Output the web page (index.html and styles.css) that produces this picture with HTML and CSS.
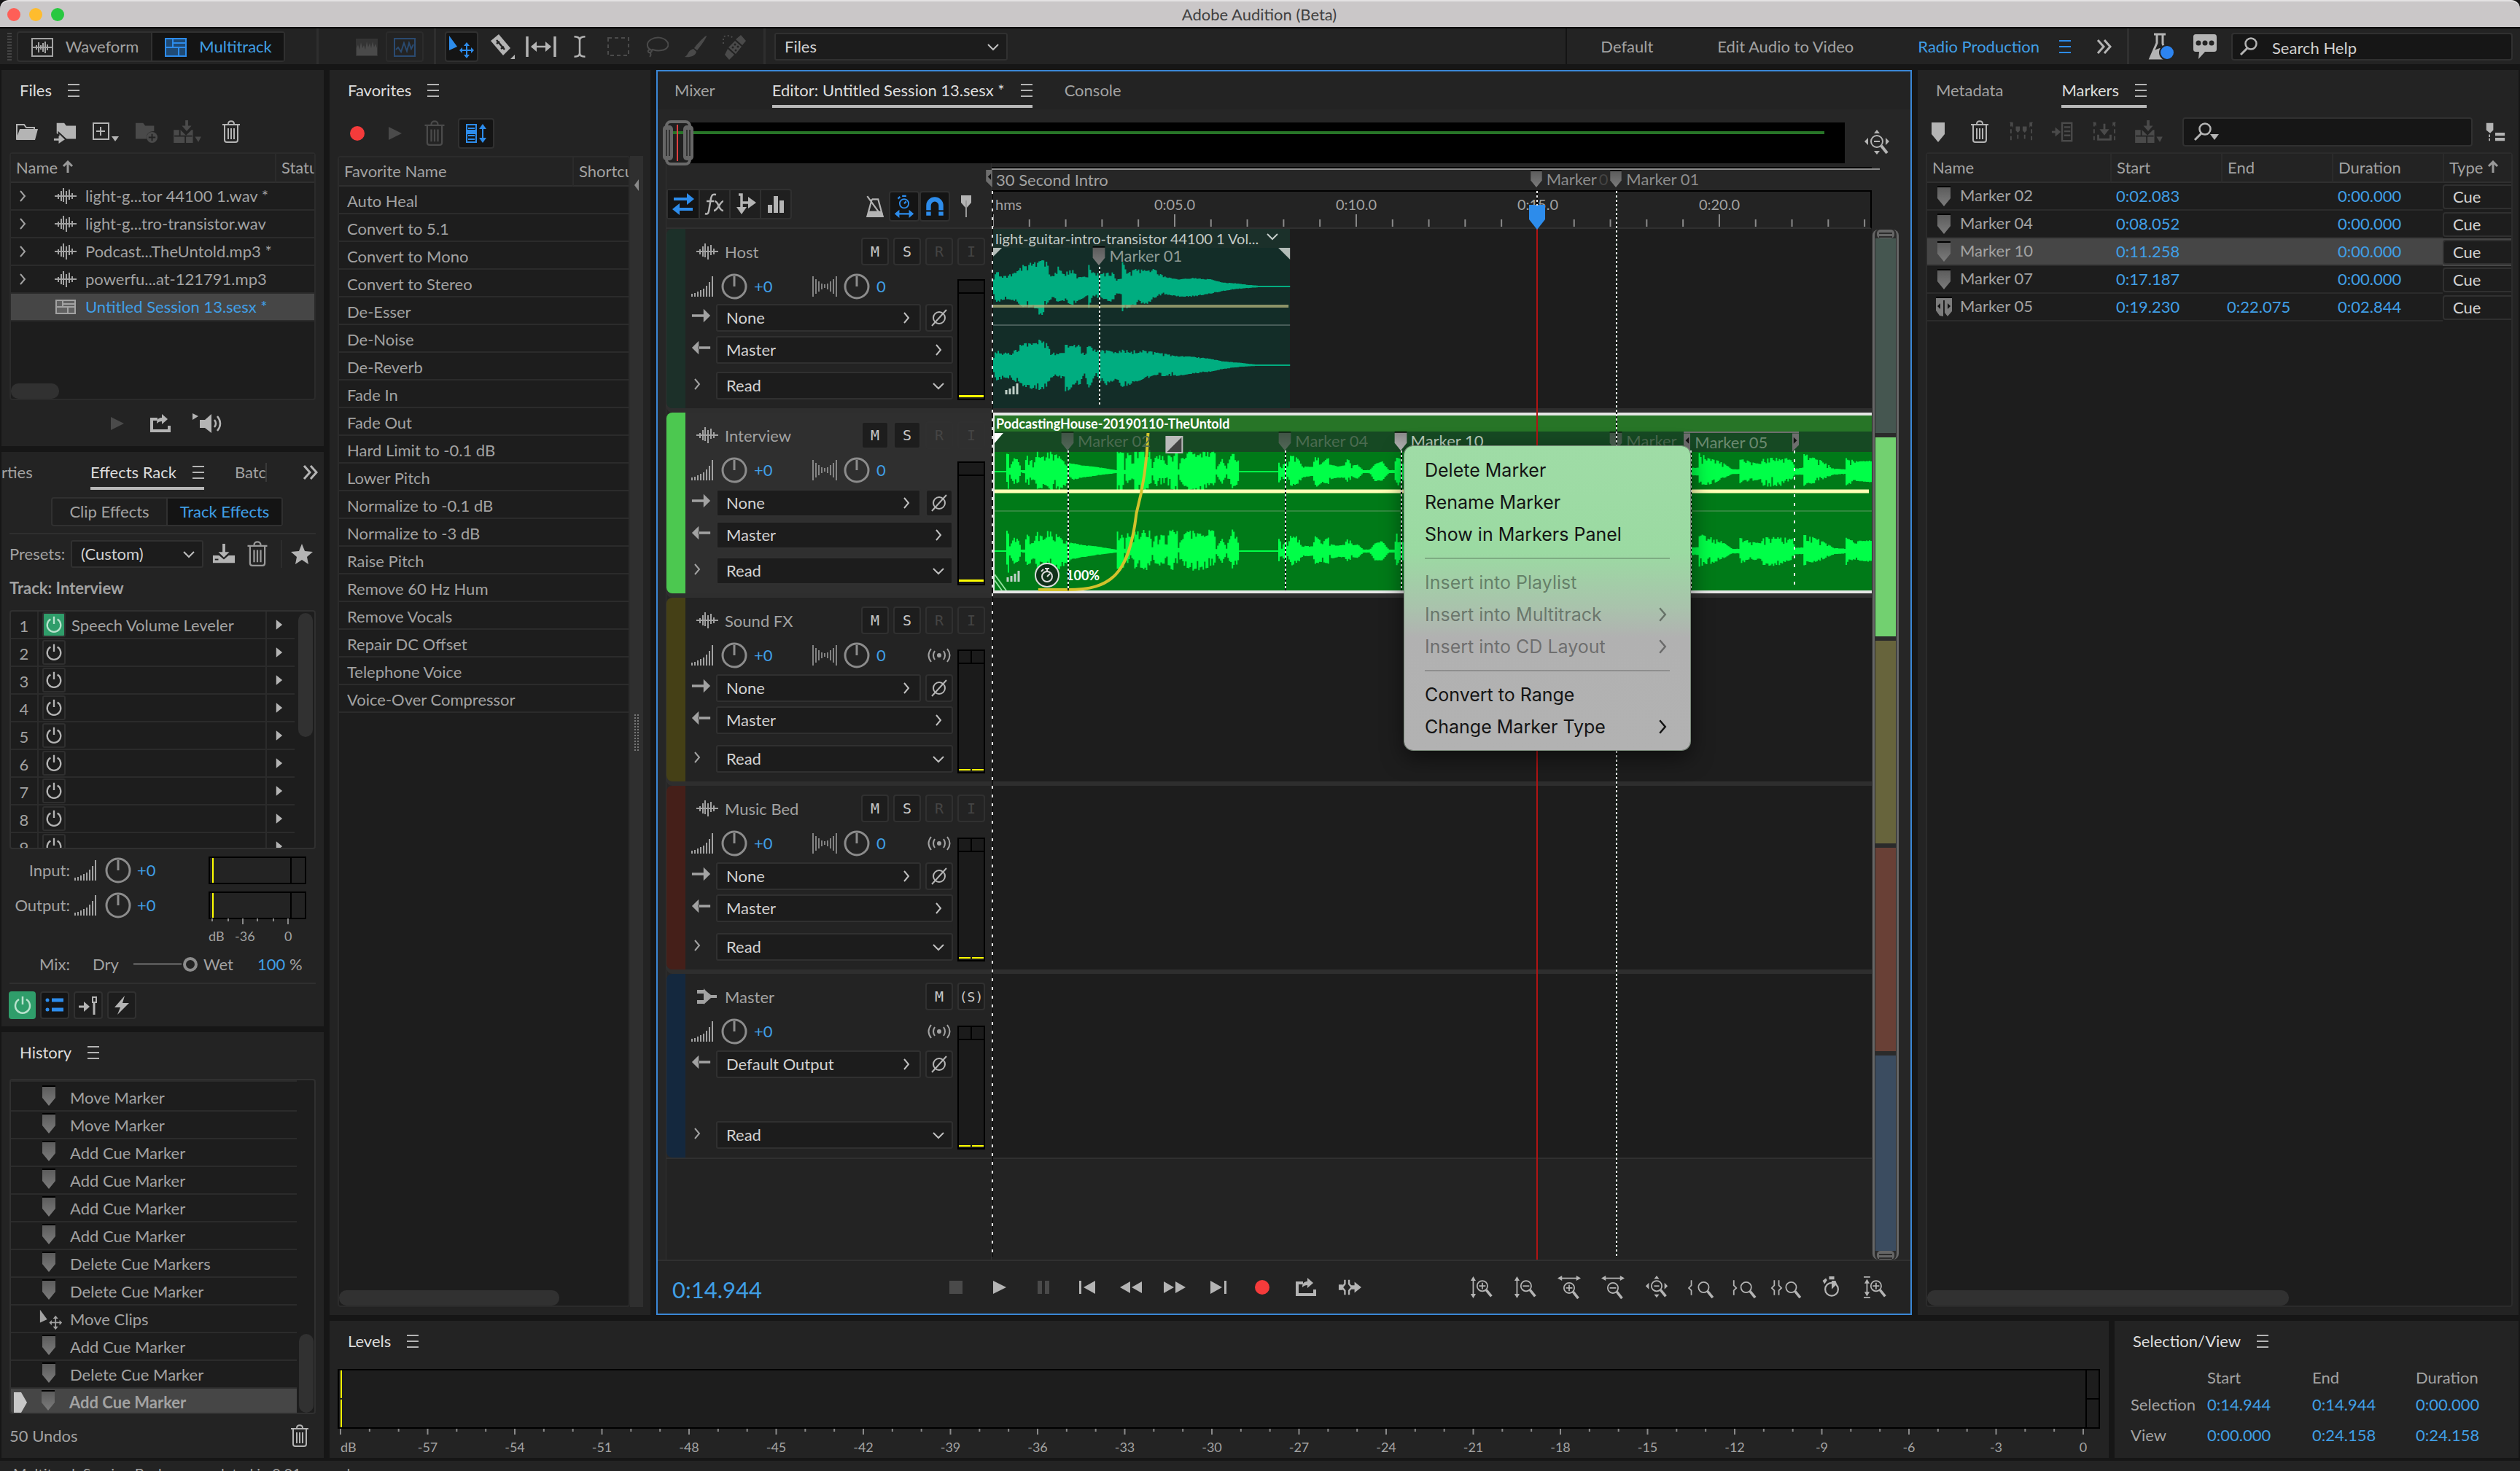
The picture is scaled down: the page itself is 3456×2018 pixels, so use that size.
FILE: index.html
```html
<!DOCTYPE html>
<html lang="en">
<head>
<meta charset="utf-8">
<title>Adobe Audition (Beta)</title>
<link rel="stylesheet" href="styles.css">
</head>
<body>
<svg class="defs" aria-hidden="true">
  <defs>
    <linearGradient id="mkfill" x1="0" y1="0" x2="0" y2="1"><stop offset="0" stop-color="#5c5c5c"/><stop offset="1" stop-color="#7c7c7c"/></linearGradient>
  </defs>
  <symbol id="i-wavebox" viewBox="0 0 32 32"><path d="M2 5h28v24H2z" fill="none" stroke="currentColor" stroke-width="2"/><path d="M3 17h26M8 14v6M11 10v14M14 14v6M17 11v12M20 9v16M23 13v8" stroke="currentColor" stroke-width="2"/></symbol>
  <symbol id="i-multi" viewBox="0 0 32 32"><path d="M1 5h30v24H1z" fill="currentColor" fill-opacity=".45"/><path d="M2 5h28v24H2zM2 17h28M12 5v12M20 17v12M12 11h18" fill="none" stroke="currentColor" stroke-width="2"/></symbol>
  <symbol id="i-spec" viewBox="0 0 32 32"><path d="M1 5h30v24H1z" fill="currentColor" opacity=".45"/><path d="M2 28V18l2-5 2 7 2-10 2 8 2-4 2 6 2-11 2 8 2-6 2 7 2-9 2 8 2-5 2 6v10z" fill="currentColor"/></symbol>
  <symbol id="i-pitch" viewBox="0 0 32 32"><path d="M2 5h28v24H2z" fill="none" stroke="currentColor" stroke-width="2"/><path d="M4 20l3-3 4 6 4-12 4 11 3-11 3 8 3-6" fill="none" stroke="currentColor" stroke-width="2"/></symbol>
  <symbol id="i-move" viewBox="0 0 36 36"><path d="M1 3v20l11-5z" fill="currentColor"/><path d="M25 12l4 5h-3v5h5v-3l4 4-4 4v-3h-5v5h3l-4 5-4-5h3v-5h-5v3l-4-4 4-4v3h5v-5h-3z" fill="currentColor"/></symbol>
  <symbol id="i-razor" viewBox="0 0 36 36"><path d="M2 10L13 1l16 19-10 10z" fill="currentColor"/><path d="M10 9l11 13M10 14l4-3M16 21l4-3" stroke="#232323" stroke-width="2.500"/><path d="M35 29v6h-6z" fill="currentColor"/></symbol>
  <symbol id="i-slip" viewBox="0 0 42 32"><path d="M2 2v28M40 2v28" stroke="currentColor" stroke-width="3.500"/><path d="M8 16h26" stroke="currentColor" stroke-width="2.500"/><path d="M15 9l-8 7 8 7zM27 9l8 7-8 7z" fill="currentColor"/></symbol>
  <symbol id="i-ibeam" viewBox="0 0 32 32"><path d="M10 5c4 0 6 1 6 4v14c0 3-2 4-6 4M22 5c-4 0-6 1-6 4v14c0 3 2 4 6 4" fill="none" stroke="currentColor" stroke-width="2"/></symbol>
  <symbol id="i-marquee" viewBox="0 0 32 32"><path d="M2 4h28v24H2z" fill="none" stroke="currentColor" stroke-width="2" stroke-dasharray="5 4"/></symbol>
  <symbol id="i-lasso" viewBox="0 0 32 32"><path d="M9 21C1 18 1 10 8 6s16-3 21 2 2 12-7 13c-4 1-9 0-12-1zM9 21c-3-2-6 0-5 2s5 1 5-2M6 24c2 2 2 4 0 6" fill="none" stroke="currentColor" stroke-width="2"/></symbol>
  <symbol id="i-brush" viewBox="0 0 32 32"><path d="M31 1c1 1-9 16-13 20l-4-3C18 12 30 0 31 1zM13 19l4 4c-1 6-9 8-16 7 5-2 4-9 12-11z" fill="currentColor"/></symbol>
  <symbol id="i-heal" viewBox="0 0 36 36"><path d="M27 2l7 8-5 6-9-8zM19 10l9 8-8 10-10-9zM9 21l9 8-7 7-6-7z" fill="currentColor"/><g fill="#232323"><circle cx="19" cy="15" r="1.500"/><circle cx="23" cy="18" r="1.500"/><circle cx="16" cy="19" r="1.500"/><circle cx="20" cy="23" r="1.500"/></g><path d="M3 14V6c0-4 12-4 13 1" fill="none" stroke="currentColor" stroke-width="2" stroke-dasharray="2 3"/></symbol>
  <symbol id="i-down" viewBox="0 0 16 16"><path d="M1 5l7 7 7-7" fill="none" stroke="currentColor" stroke-width="2"/></symbol>
  <symbol id="i-right" viewBox="0 0 16 16"><path d="M5 1l6 7-6 7" fill="none" stroke="currentColor" stroke-width="2"/></symbol>
  <symbol id="i-dbl" viewBox="0 0 24 24"><path d="M3 3l8 9-8 9M12 3l8 9-8 9" fill="none" stroke="currentColor" stroke-width="3"/></symbol>
  <symbol id="i-up" viewBox="0 0 16 18"><path d="M8 17V3M2 8l6-6 6 6" fill="none" stroke="currentColor" stroke-width="3"/></symbol>
  <symbol id="i-flask" viewBox="0 0 36 40"><path d="M8 3h16M12 4v11L3 36h25l-8-20V4" fill="none" stroke="currentColor" stroke-width="3"/><path d="M8 25l8-3 6 2 6 12H3z" fill="currentColor"/><circle cx="26" cy="28" r="10" fill="#2d84f0" stroke="#232323" stroke-width="2"/></symbol>
  <symbol id="i-chat" viewBox="0 0 36 40"><path d="M6 3h24c3 0 4 1 4 4v16c0 3-1 4-4 4H18l-9 10 1-10H6c-3 0-4-1-4-4V7c0-3 1-4 4-4z" fill="currentColor"/><g fill="#232323"><circle cx="9" cy="15" r="3.500"/><circle cx="18" cy="15" r="3.500"/><circle cx="27" cy="15" r="3.500"/></g></symbol>
  <symbol id="i-search" viewBox="0 0 28 28"><circle cx="17" cy="10" r="7.500" fill="none" stroke="currentColor" stroke-width="2.500"/><path d="M12 16L3 25" stroke="currentColor" stroke-width="3"/></symbol>
  <symbol id="i-folder" viewBox="0 0 32 32"><path d="M2 26V6h10l3 4h11v4" fill="none" stroke="currentColor" stroke-width="2"/><path d="M1 27l5-15h25l-4 15z" fill="currentColor"/></symbol>
  <symbol id="i-import" viewBox="0 0 34 34"><path d="M5 19V4h11l3 4h14v19H18" fill="currentColor"/><path d="M1 28h10" stroke="currentColor" stroke-width="3"/><path d="M8 20l9 8-9 6z" fill="currentColor"/><path d="M4 22h4v-4l11 10" fill="none" stroke="#232323" stroke-width="2"/></symbol>
  <symbol id="i-new" viewBox="0 0 40 32"><path d="M3 4h21v22H3z" fill="none" stroke="currentColor" stroke-width="2"/><path d="M13 9v12M7 15h12" stroke="currentColor" stroke-width="2"/><path d="M28 22h10l-5 7z" fill="currentColor"/></symbol>
  <symbol id="i-folderadd" viewBox="0 0 34 34"><path d="M1 4h11l3 4h13v8c-8 0-12 5-11 11H1z" fill="currentColor"/><circle cx="25" cy="25" r="8" fill="currentColor"/><path d="M25 20v10M20 25h10" stroke="#232323" stroke-width="2"/></symbol>
  <symbol id="i-insert" viewBox="0 0 42 34"><path d="M1 14h10l8 8 8-8h2v19H1z" fill="currentColor"/><path d="M18 0h4v8h5l-7 8-7-8h5z" fill="currentColor"/><path d="M2 23h26M10 14v9M18 23v10" stroke="#232323" stroke-width="2"/><path d="M32 24h9l-4 8z" fill="currentColor"/></symbol>
  <symbol id="i-trash" viewBox="0 0 28 32"><path d="M2 6h24M10 5c0-5 8-5 8 0M5 7v20q0 3 3 3h12q3 0 3-3V7" fill="none" stroke="currentColor" stroke-width="2"/><path d="M10 11v15M14 11v15M18 11v15" stroke="currentColor" stroke-width="2"/></symbol>
  <symbol id="i-wavelet" viewBox="0 0 30 24"><path d="M0 12h30M5 9v7M9 5v14M12 1v19M16 5v18M20 3v14M24 8v8" stroke="currentColor" stroke-width="2"/></symbol>
  <symbol id="i-session" viewBox="0 0 30 24"><path d="M1 3h28v18H1z" fill="currentColor" fill-opacity=".3"/><path d="M2 3h26v18H2zM2 12h26M11 3v9M18 12v9M11 8h17" fill="none" stroke="currentColor" stroke-width="2"/></symbol>
  <symbol id="i-play" viewBox="0 0 32 32"><path d="M7 7l18 9-18 9z" fill="currentColor"/></symbol>
  <symbol id="i-export" viewBox="0 0 32 32"><path d="M12 10H4v16h24v-7" fill="none" stroke="currentColor" stroke-width="4"/><path d="M11 16c0-6 3-8 7-8V3l8 7-8 7v-4c-3 0-5 1-7 3z" fill="currentColor"/></symbol>
  <symbol id="i-speaker" viewBox="0 0 44 32"><path d="M1 2l8 4-8 5zM11 11h7l9-8v26l-9-7h-7z" fill="currentColor"/><path d="M31 11q4 5 0 10M35 6q8 10 0 20" fill="none" stroke="currentColor" stroke-width="2.500"/></symbol>
  <symbol id="i-rec" viewBox="0 0 32 32"><circle cx="16" cy="16" r="10" fill="#f53b3b"/></symbol>
  <symbol id="i-sync" viewBox="0 0 32 32"><path d="M3 4h13v24H3zM5 9h9M5 14h9M5 19h9M5 24h9" fill="none" stroke="currentColor" stroke-width="2"/><path d="M5 12h9v4H5zM25 8v16" fill="currentColor" stroke="currentColor" stroke-width="2"/><path d="M20 10l5-7 5 7zM20 22l5 7 5-7z" fill="currentColor"/></symbol>
  <symbol id="i-power" viewBox="0 0 28 28"><path d="M9 6a10 10 0 1 0 10 0M14 2v11" fill="none" stroke="currentColor" stroke-width="2.500"/></symbol>
  <symbol id="i-save" viewBox="0 0 34 32"><path d="M1 18h9l7 6 7-6h9v11H1z" fill="currentColor"/><path d="M15 1h4v12h6l-8 8-8-8h6z" fill="currentColor"/><path d="M4 24h5" stroke="#232323" stroke-width="2"/></symbol>
  <symbol id="i-star" viewBox="0 0 32 32"><path d="M16 2l4 10 11 1-8 7 2 10-9-6-9 6 2-10-8-7 11-1z" fill="currentColor"/></symbol>
  <symbol id="i-tri" viewBox="0 0 12 18"><path d="M1 1l10 8-10 8z" fill="currentColor"/></symbol>
  <symbol id="i-bars" viewBox="0 0 32 30"><path d="M1 25v4M5 24v5M9 22v7M13 20v9M17 18v11M21 14v15M25 9v20M29 1v28" stroke="currentColor" stroke-width="2"/></symbol>
  <symbol id="i-pan" viewBox="0 0 34 30"><path d="M1 1v28M5 5v20M9 8v14M13 11v8M21 11v8M25 8v14M29 5v20M33 1v28M17 12v5" stroke="currentColor" stroke-width="1.500"/></symbol>
  <symbol id="i-knob" viewBox="0 0 36 36"><circle cx="18" cy="18" r="16" fill="none" stroke="#8c8c8c" stroke-width="3"/><path d="M18 4v14" stroke="#8c8c8c" stroke-width="3"/></symbol>
  <symbol id="i-list" viewBox="0 0 28 28"><path d="M10 7h16M10 20h16" stroke="currentColor" stroke-width="5"/><circle cx="4" cy="7" r="2.500" fill="currentColor"/><circle cx="4" cy="20" r="2.500" fill="currentColor"/></symbol>
  <symbol id="i-route" viewBox="0 0 28 28"><path d="M1 16h8" stroke="currentColor" stroke-width="3"/><path d="M8 9l8 7-8 7z" fill="currentColor"/><path d="M20 3h5v7h-5z" fill="none" stroke="currentColor" stroke-width="2"/><path d="M22 10v17" stroke="currentColor" stroke-width="3"/></symbol>
  <symbol id="i-bolt" viewBox="0 0 28 28"><path d="M18 1L4 17h8L8 27l16-16h-9z" fill="currentColor"/></symbol>
  <symbol id="i-marker" viewBox="0 0 18 28"><path d="M0 0h18v2H0z" fill="#000"/><path d="M0 2h18v15l-9 11-9-11z" fill="url(#mkfill)"/></symbol>
  <symbol id="i-mkrange" viewBox="0 0 24 28"><path d="M1 0h22v2H1z" fill="#000"/><path d="M1 2h22v18l-6 7-4-5V5h-2v22l-5-1-5-7z" fill="#7c7c7c"/><path d="M3 13l4-4v8zM21 13l-4-4v8z" fill="#111"/></symbol>
  <symbol id="i-mkl" viewBox="0 0 10 28"><path d="M0 0h10v28L0 18z" fill="#6e6e6e"/><path d="M3 11l5-5v10z" fill="#111"/></symbol>
  <symbol id="i-mkr" viewBox="0 0 10 28"><path d="M0 0h10v18L0 28z" fill="#6e6e6e"/><path d="M7 11L2 6v10z" fill="#111"/></symbol>
  <symbol id="i-mkbig" viewBox="0 0 32 32"><path d="M7 3h18v16l-9 11-9-11z" fill="currentColor"/></symbol>
  <symbol id="i-head" viewBox="0 0 24 34"><path d="M1 0h22v20L12 34 1 20z" fill="#2d8ceb"/></symbol>
  <symbol id="i-mkset" viewBox="0 0 34 32"><path d="M2 2v28M32 2v28M12 10v20M22 10v20" stroke="currentColor" stroke-width="2" stroke-dasharray="6 4"/><path d="M0 2h5v8zM34 2h-5v8zM9 8h6v6l-3 3-3-3zM19 8h6v6l-3 3-3-3z" fill="currentColor"/></symbol>
  <symbol id="i-mklist" viewBox="0 0 34 32"><path d="M16 3h14v26H16zM19 9h9M19 15h9M19 21h9" fill="none" stroke="currentColor" stroke-width="2.500"/><path d="M1 16h6" stroke="currentColor" stroke-width="3"/><path d="M6 9l8 7-8 7z" fill="currentColor"/></symbol>
  <symbol id="i-mkexp" viewBox="0 0 34 32"><path d="M2 2v28M32 2v28" stroke="currentColor" stroke-width="2" stroke-dasharray="6 4"/><path d="M17 4v10" stroke="currentColor" stroke-width="3"/><path d="M10 12h14l-7 9zM0 2h5v6zM34 2h-5v6z" fill="currentColor"/><path d="M8 20v7h18v-7" fill="none" stroke="currentColor" stroke-width="3"/></symbol>
  <symbol id="i-mkview" viewBox="0 0 32 32"><path d="M2 2h11v11l-5 5-6-5zM16 17h15v5H16zM16 25h15v5H16z" fill="currentColor"/><path d="M7 20v12" stroke="currentColor" stroke-width="2" stroke-dasharray="4 2"/></symbol>
  <symbol id="i-metro" viewBox="0 0 26 30"><path d="M9 6h8l6 22H3L9 6M3 2l16 22" fill="none" stroke="currentColor" stroke-width="2"/><path d="M5 21h17l2 8H3z" fill="currentColor"/></symbol>
  <symbol id="i-clocksnap" viewBox="0 0 30 34"><circle cx="15" cy="13" r="6.500" fill="none" stroke="currentColor" stroke-width="2"/><path d="M15 13l3-3M12 2h6M6 6l3-3M4 28h22" stroke="currentColor" stroke-width="2.500"/><path d="M8 22l-7 6 7 6zM22 22l7 6-7 6z" fill="currentColor"/></symbol>
  <symbol id="i-magnet" viewBox="0 0 30 30"><path d="M7 27V14a8 8 0 0 1 16 0v13" fill="none" stroke="currentColor" stroke-width="6"/><path d="M2 21h26" stroke="#161616" stroke-width="2"/></symbol>
  <symbol id="i-pin" viewBox="0 0 20 32"><path d="M3 1h14v10l-7 8-7-8z" fill="currentColor"/><path d="M10 8v23" stroke="#999" stroke-width="2"/></symbol>
  <symbol id="i-swap" viewBox="0 0 32 32"><path d="M3 9h20M9 23h20" stroke="currentColor" stroke-width="4"/><path d="M21 1l10 8-10 8zM11 15L1 23l10 8z" fill="currentColor"/></symbol>
  <symbol id="i-fx" viewBox="0 0 32 32"><path d="M3 29c5 2 5-3 6-9l2-12c1-5 3-6 7-5M5 12h10M16 12c6 0 5 13 12 13M28 12c-4 0-8 13-13 13" fill="none" stroke="currentColor" stroke-width="2.500"/></symbol>
  <symbol id="i-send" viewBox="0 0 32 32"><path d="M7 3h4v18M11 14h11" fill="none" stroke="currentColor" stroke-width="3.500"/><path d="M4 20h14l-7 10zM20 6l11 8-11 8z" fill="currentColor"/></symbol>
  <symbol id="i-eq" viewBox="0 0 32 32"><path d="M8 28V17M16 28V5M24 28V11" stroke="currentColor" stroke-width="6"/></symbol>
  <symbol id="i-phase" viewBox="0 0 26 26"><circle cx="13" cy="13" r="8" fill="none" stroke="currentColor" stroke-width="2"/><path d="M3 24L23 2" stroke="currentColor" stroke-width="2"/></symbol>
  <symbol id="i-mono" viewBox="0 0 32 26"><circle cx="16" cy="13" r="3" fill="currentColor"/><path d="M10 7q-4 6 0 12M22 7q4 6 0 12M5 4q-7 9 0 18M27 4q7 9 0 18" fill="none" stroke="currentColor" stroke-width="2"/></symbol>
  <symbol id="i-ar" viewBox="0 0 30 22"><path d="M1 9h18v4H1zM18 1l10 10-10 10z" fill="currentColor"/></symbol>
  <symbol id="i-al" viewBox="0 0 30 22"><path d="M10 9h18v4H10zM11 1L1 11l10 10z" fill="currentColor"/></symbol>
  <symbol id="i-bus" viewBox="0 0 30 24"><path d="M1 3h10l9 7h8v4h-8l-9 8H1v-5h9V8H1z" fill="currentColor"/><path d="M10 1l10 11-10 11z" fill="currentColor"/></symbol>
  <symbol id="i-lens" viewBox="0 0 36 36"><circle cx="19" cy="16" r="8" fill="none" stroke="currentColor" stroke-width="2"/><path d="M25 22l8 10" stroke="currentColor" stroke-width="4"/></symbol>
  <symbol id="i-varrow" viewBox="0 0 36 36"><path d="M5 6v24" stroke="currentColor" stroke-width="2"/><path d="M1 8l4-7 4 7zM1 28l4 7 4-7z" fill="currentColor"/></symbol>
  <symbol id="i-harrow" viewBox="0 0 36 36"><path d="M5 4h26" stroke="currentColor" stroke-width="2"/><path d="M7 0L0 4l7 4zM29 0l7 4-7 4z" fill="currentColor"/></symbol>
  <symbol id="i-plus" viewBox="0 0 36 36"><path d="M19 11v10M14 16h10" stroke="currentColor" stroke-width="2"/></symbol>
  <symbol id="i-minus" viewBox="0 0 36 36"><path d="M14 16h10" stroke="currentColor" stroke-width="2"/></symbol>
  <symbol id="i-zoomout4" viewBox="0 0 36 36"><circle cx="18" cy="16" r="8" fill="none" stroke="currentColor" stroke-width="2"/><path d="M24 22l8 10" stroke="currentColor" stroke-width="4"/><path d="M14 16h8" stroke="currentColor" stroke-width="2"/><path d="M14 5l4-5 4 5zM6 11l-5 5 5 5zM30 11l5 5-5 5zM14 29l4 5 4-5z" fill="currentColor"/></symbol>
  <symbol id="i-timer" viewBox="0 0 36 36"><circle cx="18" cy="21" r="10" fill="none" stroke="currentColor" stroke-width="2.500"/><path d="M18 21V8h6l2 5zM14 1h8v5h-8zM4 8l5-4 2 3-4 6z" fill="currentColor"/></symbol>
  <symbol id="i-stop" viewBox="0 0 32 32"><path d="M7 7h18v18H7z" fill="currentColor"/></symbol>
  <symbol id="i-pause" viewBox="0 0 32 32"><path d="M8 7h6v18H8zM18 7h6v18h-6z" fill="currentColor"/></symbol>
  <symbol id="i-prev" viewBox="0 0 32 32"><path d="M5 7h3v18H5zM27 7v18L11 16z" fill="currentColor"/></symbol>
  <symbol id="i-rew" viewBox="0 0 32 32"><path d="M15 8v16L1 16zM31 8v16l-14-8z" fill="currentColor"/></symbol>
  <symbol id="i-ff" viewBox="0 0 32 32"><path d="M1 8v16l14-8zM17 8v16l14-8z" fill="currentColor"/></symbol>
  <symbol id="i-next" viewBox="0 0 32 32"><path d="M5 7v18l16-9zM24 7h3v18h-3z" fill="currentColor"/></symbol>
  <symbol id="i-skip" viewBox="0 0 34 32"><path d="M10 5v6l-4 5 4 5v6M16 5v6l4 5-4 5v6" fill="none" stroke="currentColor" stroke-width="2.500"/><path d="M1 12h6v8H1zM19 13h5V8l10 8-10 8v-5h-5z" fill="currentColor"/></symbol>
  <symbol id="i-tinybars" viewBox="0 0 20 16"><path d="M2 10v6M7 8v8M12 5v11M17 1v15" stroke="currentColor" stroke-width="3"/></symbol>
</svg>

<div class="app">
  <header class="titlebar">
    <span class="dot red"></span><span class="dot amber"></span><span class="dot green"></span>
    <h1>Adobe Audition (Beta)</h1>
  </header>

  <nav class="toolbar" aria-label="Tools">
    <span class="grip"></span>
    <div class="seg views">
      <button><svg class="i32"><use href="#i-wavebox"/></svg>Waveform</button>
      <button class="on"><svg class="i32"><use href="#i-multi"/></svg>Multitrack</button>
    </div>
    <span class="vsep wide"></span>
    <div class="tools-a">
      <button class="tool dim" aria-label="Spectral frequency"><svg class="i32"><use href="#i-spec"/></svg></button>
      <button class="tool dimblue boxed" aria-label="Spectral pitch"><svg class="i32"><use href="#i-pitch"/></svg></button>
    </div>
    <span class="vsep"></span>
    <div class="tools-b">
      <button class="tool on" aria-label="Move"><svg class="i36"><use href="#i-move"/></svg></button>
      <button class="tool" aria-label="Razor"><svg class="i36"><use href="#i-razor"/></svg></button>
      <button class="tool" aria-label="Slip"><svg class="slip"><use href="#i-slip"/></svg></button>
      <button class="tool" aria-label="Time selection"><svg class="i40"><use href="#i-ibeam"/></svg></button>
      <button class="tool dim" aria-label="Marquee"><svg class="i32"><use href="#i-marquee"/></svg></button>
      <button class="tool dim" aria-label="Lasso"><svg class="i32"><use href="#i-lasso"/></svg></button>
      <button class="tool dim" aria-label="Brush"><svg class="i32"><use href="#i-brush"/></svg></button>
      <button class="tool dim" aria-label="Spot healing"><svg class="i36"><use href="#i-heal"/></svg></button>
    </div>
    <span class="vsep"></span>
    <label class="sel filesel"><select aria-label="Panel"><option>Files</option></select><svg><use href="#i-down"/></svg></label>
    <div class="workspaces">
      <a href="#default">Default</a>
      <a href="#video">Edit Audio to Video</a>
      <a href="#radio" class="on">Radio Production</a>
      <button class="burger blue" aria-label="Workspace menu"></button>
      <button class="more" aria-label="More"><svg class="i24"><use href="#i-dbl"/></svg></button>
    </div>
    <div class="help">
      <button class="tool" aria-label="Beta"><svg class="tall"><use href="#i-flask"/></svg></button>
      <button class="tool" aria-label="Feedback"><svg class="tall"><use href="#i-chat"/></svg></button>
      <label class="field"><svg class="i28"><use href="#i-search"/></svg><input type="text" value="Search Help" aria-label="Search Help"></label>
    </div>
  </nav>

  <div class="workspace">
    <div class="left">
      <section class="panel files">
        <div class="tabs"><h2 class="tab solo">Files</h2><button class="burger" aria-label="Files menu"></button></div>
        <div class="tools">
          <button aria-label="Open"><svg class="i32"><use href="#i-folder"/></svg></button>
          <button aria-label="Import"><svg class="i32"><use href="#i-import"/></svg></button>
          <button aria-label="New"><svg class="w40"><use href="#i-new"/></svg></button>
          <button class="dim" aria-label="New folder"><svg class="i32"><use href="#i-folderadd"/></svg></button>
          <button class="dim" aria-label="Insert"><svg class="w40"><use href="#i-insert"/></svg></button>
          <button aria-label="Delete"><svg class="i32"><use href="#i-trash"/></svg></button>
        </div>
        <div class="list">
          <table>
            <colgroup><col class="c-file"><col></colgroup>
            <thead><tr><th>Name<svg class="sort"><use href="#i-up"/></svg></th><th>Status</th></tr></thead>
            <tbody>
              <tr><td colspan="2"><div class="file"><svg class="i16"><use href="#i-right"/></svg><svg class="i30"><use href="#i-wavelet"/></svg>light-g...tor 44100 1.wav *</div></td></tr>
              <tr><td colspan="2"><div class="file"><svg class="i16"><use href="#i-right"/></svg><svg class="i30"><use href="#i-wavelet"/></svg>light-g...tro-transistor.wav</div></td></tr>
              <tr><td colspan="2"><div class="file"><svg class="i16"><use href="#i-right"/></svg><svg class="i30"><use href="#i-wavelet"/></svg>Podcast...TheUntold.mp3 *</div></td></tr>
              <tr><td colspan="2"><div class="file"><svg class="i16"><use href="#i-right"/></svg><svg class="i30"><use href="#i-wavelet"/></svg>powerfu...at-121791.mp3</div></td></tr>
              <tr class="picked"><td colspan="2"><div class="file"><span class="i16"></span><svg class="i30"><use href="#i-session"/></svg><span class="blue">Untitled Session 13.sesx *</span></div></td></tr>
            </tbody>
          </table>
          <span class="hthumb" style="width:66px"></span>
        </div>
        <div class="preview">
          <button class="dim" aria-label="Play"><svg class="i32"><use href="#i-play"/></svg></button>
          <button aria-label="Loop"><svg class="i32"><use href="#i-export"/></svg></button>
          <button aria-label="Auto-play"><svg class="speaker"><use href="#i-speaker"/></svg></button>
        </div>
      </section>

      <section class="panel rack">
        <div class="tabs racktabs">
          <span class="tab off">rties</span>
          <h2 class="tab cur">Effects Rack<button class="burger" aria-label="Rack menu"></button></h2>
          <span class="tab off cut">Batch</span>
          <button class="more" aria-label="More panels"><svg class="i24"><use href="#i-dbl"/></svg></button>
        </div>
        <div class="seg racks"><button>Clip Effects</button><button class="on">Track Effects</button></div>
        <hr>
        <div class="presets">
          <label for="preset">Presets:</label>
          <span class="sel"><select id="preset"><option>(Custom)</option></select><svg><use href="#i-down"/></svg></span>
          <button aria-label="Save preset"><svg class="i32"><use href="#i-save"/></svg></button>
          <button aria-label="Delete preset"><svg class="i36"><use href="#i-trash"/></svg></button>
          <button class="fav" aria-label="Favorite"><svg class="i32"><use href="#i-star"/></svg></button>
        </div>
        <h3>Track: Interview</h3>
        <div class="slots">
          <ol>
            <li><b>1</b><button class="pw on" aria-label="Power 1"><svg><use href="#i-power"/></svg></button><span>Speech Volume Leveler</span><i><svg><use href="#i-tri"/></svg></i></li>
            <li><b>2</b><button class="pw" aria-label="Power 2"><svg><use href="#i-power"/></svg></button><span></span><i><svg><use href="#i-tri"/></svg></i></li>
            <li><b>3</b><button class="pw" aria-label="Power 3"><svg><use href="#i-power"/></svg></button><span></span><i><svg><use href="#i-tri"/></svg></i></li>
            <li><b>4</b><button class="pw" aria-label="Power 4"><svg><use href="#i-power"/></svg></button><span></span><i><svg><use href="#i-tri"/></svg></i></li>
            <li><b>5</b><button class="pw" aria-label="Power 5"><svg><use href="#i-power"/></svg></button><span></span><i><svg><use href="#i-tri"/></svg></i></li>
            <li><b>6</b><button class="pw" aria-label="Power 6"><svg><use href="#i-power"/></svg></button><span></span><i><svg><use href="#i-tri"/></svg></i></li>
            <li><b>7</b><button class="pw" aria-label="Power 7"><svg><use href="#i-power"/></svg></button><span></span><i><svg><use href="#i-tri"/></svg></i></li>
            <li><b>8</b><button class="pw" aria-label="Power 8"><svg><use href="#i-power"/></svg></button><span></span><i><svg><use href="#i-tri"/></svg></i></li>
            <li><b>9</b><button class="pw" aria-label="Power 9"><svg><use href="#i-power"/></svg></button><span></span><i><svg><use href="#i-tri"/></svg></i></li>
          </ol>
          <div class="vthumb" style="height:170px"></div>
        </div>
        <div class="gain"><span class="lab">Input:</span><svg class="bars"><use href="#i-bars"/></svg><svg class="i36"><use href="#i-knob"/></svg><span class="blue">+0</span><div class="hmeter"></div></div>
        <div class="gain"><span class="lab">Output:</span><svg class="bars"><use href="#i-bars"/></svg><svg class="i36"><use href="#i-knob"/></svg><span class="blue">+0</span><div class="hmeter"></div></div>
        <div class="gainscale"><svg class="gticks" viewBox="0 0 132 8"><path d="M5 0v4M27 0v4M47 0v8M67 0v4M89 0v4M109 0v8" stroke="#8a8a8a" stroke-width="2"/></svg><div><span>dB</span><span>-36</span><span>0</span></div></div>
        <div class="mix"><label for="mix">Mix:</label><span class="dry">Dry</span><input id="mix" type="range" value="100"><span class="wet">Wet</span><span class="pct"><span class="blue">100</span> %</span></div>
        <hr>
        <div class="rackfoot">
          <button class="green" aria-label="Rack power"><svg class="i28"><use href="#i-power"/></svg></button>
          <button class="on" aria-label="List"><svg class="i28"><use href="#i-list"/></svg></button>
          <button aria-label="Pre-fader"><svg class="i28"><use href="#i-route"/></svg></button>
          <button aria-label="Pre-render"><svg class="i28"><use href="#i-bolt"/></svg></button>
        </div>
      </section>

      <section class="panel history">
        <div class="tabs"><h2 class="tab solo">History</h2><button class="burger" aria-label="History menu"></button></div>
        <div class="hist">
          <ul>
            <li><svg class="mk"><use href="#i-marker"/></svg>Move Marker</li>
            <li><svg class="mk"><use href="#i-marker"/></svg>Move Marker</li>
            <li><svg class="mk"><use href="#i-marker"/></svg>Add Cue Marker</li>
            <li><svg class="mk"><use href="#i-marker"/></svg>Add Cue Marker</li>
            <li><svg class="mk"><use href="#i-marker"/></svg>Add Cue Marker</li>
            <li><svg class="mk"><use href="#i-marker"/></svg>Add Cue Marker</li>
            <li><svg class="mk"><use href="#i-marker"/></svg>Delete Cue Markers</li>
            <li><svg class="mk"><use href="#i-marker"/></svg>Delete Cue Marker</li>
            <li class="mv"><svg class="i32"><use href="#i-move"/></svg>Move Clips</li>
            <li><svg class="mk"><use href="#i-marker"/></svg>Add Cue Marker</li>
            <li><svg class="mk"><use href="#i-marker"/></svg>Delete Cue Marker</li>
            <li class="now"><svg class="nowtag" viewBox="0 0 18 28"><path d="M0 0h10l8 14-8 14H0z" fill="#c8c8c8"/></svg><svg class="mk"><use href="#i-marker"/></svg>Add Cue Marker</li>
          </ul>
          <div class="vthumb" style="height:108px"></div>
        </div>
        <div class="histfoot"><span>50 Undos</span><button aria-label="Delete history"><svg class="i32"><use href="#i-trash"/></svg></button></div>
      </section>
    </div>

    <div class="main">
      <div class="upper">
        <section class="panel favorites">
          <div class="tabs"><h2 class="tab solo">Favorites</h2><button class="burger" aria-label="Favorites menu"></button></div>
          <div class="tools favtools">
            <button aria-label="Record"><svg class="i32"><use href="#i-rec"/></svg></button>
            <button class="dim" aria-label="Run"><svg class="i32"><use href="#i-play"/></svg></button>
            <button class="dim" aria-label="Delete favorite"><svg class="i36"><use href="#i-trash"/></svg></button>
            <button class="on" aria-label="Edit favorites"><svg class="i32"><use href="#i-sync"/></svg></button>
          </div>
          <div class="favbody">
            <div class="list favlist">
              <table>
                <colgroup><col class="c-fav"><col></colgroup>
                <thead><tr><th>Favorite Name</th><th>Shortcut</th></tr></thead>
                <tbody>
                  <tr><td colspan="2">Auto Heal</td></tr>
                  <tr><td colspan="2">Convert to 5.1</td></tr>
                  <tr><td colspan="2">Convert to Mono</td></tr>
                  <tr><td colspan="2">Convert to Stereo</td></tr>
                  <tr><td colspan="2">De-Esser</td></tr>
                  <tr><td colspan="2">De-Noise</td></tr>
                  <tr><td colspan="2">De-Reverb</td></tr>
                  <tr><td colspan="2">Fade In</td></tr>
                  <tr><td colspan="2">Fade Out</td></tr>
                  <tr><td colspan="2">Hard Limit to -0.1 dB</td></tr>
                  <tr><td colspan="2">Lower Pitch</td></tr>
                  <tr><td colspan="2">Normalize to -0.1 dB</td></tr>
                  <tr><td colspan="2">Normalize to -3 dB</td></tr>
                  <tr><td colspan="2">Raise Pitch</td></tr>
                  <tr><td colspan="2">Remove 60 Hz Hum</td></tr>
                  <tr><td colspan="2">Remove Vocals</td></tr>
                  <tr><td colspan="2">Repair DC Offset</td></tr>
                  <tr><td colspan="2">Telephone Voice</td></tr>
                  <tr><td colspan="2">Voice-Over Compressor</td></tr>
                </tbody>
              </table>
              <span class="hthumb" style="width:302px"></span>
            </div>
            <div class="drawer"><svg viewBox="0 0 8 16"><path d="M7 0v16L1 8z" fill="#8a8a8a"/></svg><span class="dots"></span></div>
          </div>
        </section>

        <section class="panel editor">
          <div class="tabs edtabs">
            <span class="tab off">Mixer</span>
            <h2 class="tab cur">Editor: Untitled Session 13.sesx *<button class="burger" aria-label="Editor menu"></button></h2>
            <span class="tab off">Console</span>
          </div>
          <div class="overview">
            <div class="strip"><span class="span"></span><svg class="range" viewBox="0 0 42 60"><rect x="5" y="1" width="32" height="58" rx="6" fill="#1f1f1f" stroke="#6a6a6a" stroke-width="4"/><path d="M10 16h24" stroke="#277527" stroke-width="4"/><path d="M20 5v50" stroke="#e04040" stroke-width="2"/><rect x="0" y="6" width="14" height="48" rx="5" fill="#666"/><rect x="28" y="6" width="14" height="48" rx="5" fill="#666"/><path d="M5 12v36M9 12v36M33 12v36M37 12v36" stroke="#333" stroke-width="2"/></svg></div>
            <button aria-label="Zoom out full"><svg class="i36"><use href="#i-zoomout4"/></svg></button>
          </div>

          <div class="timeline">
            <div class="heads">
              <div class="edtools">
                <div class="seg quad">
                  <button class="on" aria-label="Inputs/Outputs"><svg class="i32"><use href="#i-swap"/></svg></button>
                  <button aria-label="Effects"><svg class="i32"><use href="#i-fx"/></svg></button>
                  <button aria-label="Sends"><svg class="i32"><use href="#i-send"/></svg></button>
                  <button aria-label="EQ"><svg class="i32"><use href="#i-eq"/></svg></button>
                </div>
                <div class="snap">
                  <button aria-label="Metronome"><svg class="i30h"><use href="#i-metro"/></svg></button>
                  <button class="on" aria-label="Snap to time"><svg class="i32"><use href="#i-clocksnap"/></svg></button>
                  <button class="on" aria-label="Snap"><svg class="i32"><use href="#i-magnet"/></svg></button>
                  <button class="pin" aria-label="Add marker"><svg class="i32"><use href="#i-pin"/></svg></button>
                </div>
              </div>

              <div class="track host h1">
                <div class="tname"><svg class="i30"><use href="#i-wavelet"/></svg><span>Host</span><button>M</button><button>S</button><button disabled>R</button><button disabled>I</button></div>
                <div class="tctl">
                  <div class="knobs"><svg class="bars"><use href="#i-bars"/></svg><svg class="i36"><use href="#i-knob"/></svg><span class="blue">+0</span><svg class="panic"><use href="#i-pan"/></svg><svg class="i36"><use href="#i-knob"/></svg><span class="blue">0</span></div>
                  <div class="row"><svg class="arr"><use href="#i-ar"/></svg><label class="sel"><select aria-label="Host input"><option>None</option></select><svg><use href="#i-right"/></svg></label><button class="ph" aria-label="Phase"><svg><use href="#i-phase"/></svg></button></div>
                  <div class="row"><svg class="arr"><use href="#i-al"/></svg><label class="sel"><select aria-label="Host output"><option>Master</option></select><svg><use href="#i-right"/></svg></label></div>
                  <div class="row last"><svg class="arr sm"><use href="#i-right"/></svg><label class="sel"><select aria-label="Host automation"><option>Read</option></select><svg><use href="#i-down"/></svg></label></div>
                </div>
                <div class="vmeter"></div>
              </div>
              <div class="track interview picked h2">
                <div class="tname"><svg class="i30"><use href="#i-wavelet"/></svg><span>Interview</span><button>M</button><button>S</button><button disabled>R</button><button disabled>I</button></div>
                <div class="tctl">
                  <div class="knobs"><svg class="bars"><use href="#i-bars"/></svg><svg class="i36"><use href="#i-knob"/></svg><span class="blue">+0</span><svg class="panic"><use href="#i-pan"/></svg><svg class="i36"><use href="#i-knob"/></svg><span class="blue">0</span></div>
                  <div class="row"><svg class="arr"><use href="#i-ar"/></svg><label class="sel"><select aria-label="Interview input"><option>None</option></select><svg><use href="#i-right"/></svg></label><button class="ph" aria-label="Phase"><svg><use href="#i-phase"/></svg></button></div>
                  <div class="row"><svg class="arr"><use href="#i-al"/></svg><label class="sel"><select aria-label="Interview output"><option>Master</option></select><svg><use href="#i-right"/></svg></label></div>
                  <div class="row last"><svg class="arr sm"><use href="#i-right"/></svg><label class="sel"><select aria-label="Interview automation"><option>Read</option></select><svg><use href="#i-down"/></svg></label></div>
                </div>
                <div class="vmeter"></div>
              </div>
              <div class="track sfx h3">
                <div class="tname"><svg class="i30"><use href="#i-wavelet"/></svg><span>Sound FX</span><button>M</button><button>S</button><button disabled>R</button><button disabled>I</button></div>
                <div class="tctl">
                  <div class="knobs"><svg class="bars"><use href="#i-bars"/></svg><svg class="i36"><use href="#i-knob"/></svg><span class="blue">+0</span><svg class="panic"><use href="#i-pan"/></svg><svg class="i36"><use href="#i-knob"/></svg><span class="blue">0</span><svg class="mono"><use href="#i-mono"/></svg></div>
                  <div class="row"><svg class="arr"><use href="#i-ar"/></svg><label class="sel"><select aria-label="Sound FX input"><option>None</option></select><svg><use href="#i-right"/></svg></label><button class="ph" aria-label="Phase"><svg><use href="#i-phase"/></svg></button></div>
                  <div class="row"><svg class="arr"><use href="#i-al"/></svg><label class="sel"><select aria-label="Sound FX output"><option>Master</option></select><svg><use href="#i-right"/></svg></label></div>
                  <div class="row last"><svg class="arr sm"><use href="#i-right"/></svg><label class="sel"><select aria-label="Sound FX automation"><option>Read</option></select><svg><use href="#i-down"/></svg></label></div>
                </div>
                <div class="vmeter stereo"></div>
              </div>
              <div class="track bed h3">
                <div class="tname"><svg class="i30"><use href="#i-wavelet"/></svg><span>Music Bed</span><button>M</button><button>S</button><button disabled>R</button><button disabled>I</button></div>
                <div class="tctl">
                  <div class="knobs"><svg class="bars"><use href="#i-bars"/></svg><svg class="i36"><use href="#i-knob"/></svg><span class="blue">+0</span><svg class="panic"><use href="#i-pan"/></svg><svg class="i36"><use href="#i-knob"/></svg><span class="blue">0</span><svg class="mono"><use href="#i-mono"/></svg></div>
                  <div class="row"><svg class="arr"><use href="#i-ar"/></svg><label class="sel"><select aria-label="Music Bed input"><option>None</option></select><svg><use href="#i-right"/></svg></label><button class="ph" aria-label="Phase"><svg><use href="#i-phase"/></svg></button></div>
                  <div class="row"><svg class="arr"><use href="#i-al"/></svg><label class="sel"><select aria-label="Music Bed output"><option>Master</option></select><svg><use href="#i-right"/></svg></label></div>
                  <div class="row last"><svg class="arr sm"><use href="#i-right"/></svg><label class="sel"><select aria-label="Music Bed automation"><option>Read</option></select><svg><use href="#i-down"/></svg></label></div>
                </div>
                <div class="vmeter stereo"></div>
              </div>
              <div class="track master h3">
                <div class="tname"><svg class="i30"><use href="#i-bus"/></svg><span>Master</span><button>M</button><button class="solo-safe">(S)</button></div>
                <div class="tctl">
                  <div class="knobs"><svg class="bars"><use href="#i-bars"/></svg><svg class="i36"><use href="#i-knob"/></svg><span class="blue">+0</span><svg class="mono"><use href="#i-mono"/></svg></div>
                  <div class="row"><svg class="arr"><use href="#i-al"/></svg><label class="sel"><select aria-label="Master output"><option>Default Output</option></select><svg><use href="#i-right"/></svg></label><button class="ph" aria-label="Phase"><svg><use href="#i-phase"/></svg></button></div>
                  <div class="row last"><svg class="arr sm"><use href="#i-right"/></svg><label class="sel"><select aria-label="Master automation"><option>Read</option></select><svg><use href="#i-down"/></svg></label></div>
                </div>
                <div class="vmeter stereo"></div>
              </div>
              <div class="blank"></div>
            </div>

            <div class="canvas">
              <div class="markerbar">
                <svg class="mkl"><use href="#i-mkl"/></svg><span>30 Second Intro</span>
                <div class="flag clip0" style="--t:14.944"><svg><use href="#i-marker"/></svg>Marker <em>0</em></div>
                <div class="flag" style="--t:17.14"><svg><use href="#i-marker"/></svg>Marker 01</div>
              </div>
              <div class="ruler">
                <span class="unit">hms</span>
                <span class="tm" style="--t:5">0:05.0</span><span class="tm" style="--t:10">0:10.0</span><span class="tm" style="--t:15">0:15.0</span><span class="tm" style="--t:20">0:20.0</span>
                <svg class="ticks" data-ticks="24.158"></svg>
              </div>
              <div class="lane h1">
                <div class="clip guitar" style="width:33.9%">
                  <div class="cliptitle">light-guitar-intro-transistor 44100 1 Vol...<svg><use href="#i-down"/></svg></div>
                  <svg class="wave" viewBox="0 0 408 220" preserveAspectRatio="none">
                    <path class="w" data-wave="guitar1" data-mid="53"/><path class="w" data-wave="guitar2" data-mid="161"/>
                    <path d="M0 53h408M0 161h408" stroke="#00ad80"/><path d="M0 106h408" stroke="#7d8c87"/><path d="M0 80h406" stroke="#b5b57e" stroke-opacity=".75" stroke-width="4"/>
                    <path d="M0 0h14L0 14zM392 0h16v16z" fill="#b4bdb9"/>
                  </svg>
                  <svg class="vol"><use href="#i-tinybars"/></svg>
                </div>
                <div class="flag in" style="--t:2.95"><svg><use href="#i-marker"/></svg>Marker 01</div>
                <span class="dash" style="--t:2.95"></span>
              </div>
              <div class="lane h2">
                <div class="clip pod">
                  <div class="cliptitle">PodcastingHouse-20190110-TheUntold</div>
                  <svg class="wave" viewBox="0 0 1206 218" preserveAspectRatio="none">
                    <path class="w" data-wave="pod1" data-mid="55"/><path class="w" data-wave="pod2" data-mid="164"/>
                    <path d="M0 55h1206M0 164h1206" stroke="#00ff48"/><path d="M0 109h1206" stroke="#5f9a64"/><path d="M0 82h1202" stroke="#ffffb4" stroke-width="5"/>
                    <path d="M0 0h1206v28H0z" fill="#203428" fill-opacity=".7"/><path d="M0 2h12L0 16z" fill="#fff"/>
                    <path d="M60 217h40c60 0 85-20 95-105Q209 60 211 2" fill="none" stroke="#d2c22c" stroke-width="4"/>
                    <path d="M236 7h22v22h-22z" fill="#444" stroke="#bbb" stroke-width="2"/><path d="M236 29V7h22z" fill="#bbb"/>
                    <path d="M0 204l10 14M0 196l16 22" stroke="#8fe09b" stroke-width="2"/>
                  </svg>
                  <svg class="vol"><use href="#i-tinybars"/></svg>
                  <div class="stretch"><svg viewBox="0 0 36 36"><circle cx="18" cy="18" r="16" fill="#10301a" stroke="#ddd" stroke-width="2"/><circle cx="18" cy="20" r="7" fill="none" stroke="#ddd" stroke-width="2"/><path d="M18 20l4-4M15 9h6M18 9v4M10 13l3-3" stroke="#ddd" stroke-width="2"/></svg>100%</div>
                </div>
                <span class="dash" style="--t:2.083"></span><span class="dash" style="--t:8.052"></span><span class="dash" style="--t:11.22"></span><span class="dash" style="--t:19.18"></span><span class="dash sparse" style="--t:22.02"></span>
                <div class="flag in faint" style="--t:2.083"><svg><use href="#i-marker"/></svg>Marker 02</div>
                <div class="flag in faint" style="--t:8.052"><svg><use href="#i-marker"/></svg>Marker 04</div>
                <div class="flag in lit" style="--t:11.22"><svg><use href="#i-marker"/></svg>Marker 10</div>
                <div class="flag in faint" style="--t:17.14"><svg><use href="#i-marker"/></svg>Marker</div>
                <div class="flag in range" style="--t:19.18"><svg><use href="#i-mkl"/></svg><span>Marker 05</span><svg><use href="#i-mkr"/></svg></div>
              </div>
              <div class="lane h3"></div>
              <div class="lane h3"></div>
              <div class="lane h3"></div>
              <div class="blank"></div>
              <span class="zero"></span>
              <span class="playline" style="--t:14.944"></span>
              <span class="dash full" style="--t:17.14"></span>
              <svg class="head" style="--t:14.944"><use href="#i-head"/></svg>
              <span class="cueline" style="--t:14.944"></span>

              <menu class="ctx">
                <li><button>Delete Marker</button></li>
                <li><button>Rename Marker</button></li>
                <li><button>Show in Markers Panel</button></li>
                <li class="line"></li>
                <li><button disabled>Insert into Playlist</button></li>
                <li><button disabled>Insert into Multitrack<svg><use href="#i-right"/></svg></button></li>
                <li><button disabled>Insert into CD Layout<svg><use href="#i-right"/></svg></button></li>
                <li class="line"></li>
                <li><button>Convert to Range</button></li>
                <li><button>Change Marker Type<svg><use href="#i-right"/></svg></button></li>
              </menu>
            </div>

            <div class="vscroll">
              <span class="cap"></span>
              <span class="s1"></span><span class="s2"></span><span class="s3"></span><span class="s4"></span><span class="s5"></span>
              <span class="cap"></span>
            </div>
          </div>

          <div class="transport">
            <output class="clock">0:14.944</output>
            <div class="keys">
              <button class="dim" aria-label="Stop"><svg class="i32"><use href="#i-stop"/></svg></button>
              <button aria-label="Play"><svg class="i32"><use href="#i-play"/></svg></button>
              <button class="dim" aria-label="Pause"><svg class="i32"><use href="#i-pause"/></svg></button>
              <button aria-label="Previous"><svg class="i32"><use href="#i-prev"/></svg></button>
              <button aria-label="Rewind"><svg class="i32"><use href="#i-rew"/></svg></button>
              <button aria-label="Fast forward"><svg class="i32"><use href="#i-ff"/></svg></button>
              <button aria-label="Next"><svg class="i32"><use href="#i-next"/></svg></button>
              <button aria-label="Record"><svg class="i32"><use href="#i-rec"/></svg></button>
              <button aria-label="Loop"><svg class="i32"><use href="#i-export"/></svg></button>
              <button aria-label="Skip selection"><svg class="i32"><use href="#i-skip"/></svg></button>
            </div>
            <div class="keys">
              <button aria-label="Zoom in amplitude"><svg class="z"><use href="#i-varrow"/><use href="#i-lens"/><use href="#i-plus"/></svg></button>
              <button aria-label="Zoom out amplitude"><svg class="z"><use href="#i-varrow"/><use href="#i-lens"/><use href="#i-minus"/></svg></button>
              <button aria-label="Zoom in time"><svg class="z" viewBox="0 0 36 36"><use href="#i-harrow"/><g transform="translate(-1 3)"><use href="#i-lens"/><use href="#i-plus"/></g></svg></button>
              <button aria-label="Zoom out time"><svg class="z" viewBox="0 0 36 36"><use href="#i-harrow"/><g transform="translate(-1 3)"><use href="#i-lens"/><use href="#i-minus"/></g></svg></button>
              <button aria-label="Zoom out full"><svg class="z"><use href="#i-zoomout4"/></svg></button>
              <button aria-label="Zoom to in point"><svg class="z" viewBox="0 0 36 36"><path d="M2 7v8l-4 4 4 4v7" transform="translate(2)" fill="none" stroke="currentColor" stroke-width="2"/><g transform="translate(4 2)"><use href="#i-lens"/></g></svg></button>
              <button aria-label="Zoom to out point"><svg class="z" viewBox="0 0 36 36"><path d="M2 7v8l4 4-4 4v7" fill="none" stroke="currentColor" stroke-width="2"/><g transform="translate(2 2)"><use href="#i-lens"/></g></svg></button>
              <button aria-label="Zoom to selection"><svg class="z" viewBox="0 0 36 36"><path d="M-3 7v8l-4 4 4 4v7M4 7v8l4 4-4 4v7" fill="none" stroke="currentColor" stroke-width="2"/><g transform="translate(4 2)"><use href="#i-lens"/></g></svg></button>
              <button aria-label="Zoom time"><svg class="z"><use href="#i-timer"/></svg></button>
              <button aria-label="Zoom selected track"><svg class="z" viewBox="0 0 36 36"><path d="M0 2h10M0 34h10M5 8v20" stroke="currentColor" stroke-width="2"/><path d="M1 12l4-7 4 7zM1 25l4 7 4-7z" fill="currentColor"/><use href="#i-lens"/><use href="#i-plus"/></svg></button>
            </div>
          </div>
        </section>

        <section class="panel markers">
          <div class="tabs mktabs">
            <span class="tab off">Metadata</span>
            <h2 class="tab cur">Markers<button class="burger" aria-label="Markers menu"></button></h2>
          </div>
          <div class="tools mktools">
            <button aria-label="Add marker"><svg class="i32"><use href="#i-mkbig"/></svg></button>
            <button aria-label="Delete marker"><svg class="i32"><use href="#i-trash"/></svg></button>
            <button class="dim" aria-label="Merge"><svg class="i32"><use href="#i-mkset"/></svg></button>
            <button class="dim" aria-label="Add to playlist"><svg class="i32"><use href="#i-mklist"/></svg></button>
            <button class="dim" aria-label="Export audio"><svg class="i32"><use href="#i-mkexp"/></svg></button>
            <button class="dim" aria-label="Insert into multitrack"><svg class="w40"><use href="#i-insert"/></svg></button>
            <label class="field"><svg class="lookup" viewBox="0 0 36 28"><use href="#i-search" width="28" height="28"/><path d="M24 17h12l-6 8z" fill="currentColor"/></svg><input type="text" aria-label="Filter markers"></label>
            <button aria-label="Marker view"><svg class="i28"><use href="#i-mkview"/></svg></button>
          </div>
          <div class="list mklist">
            <table>
              <colgroup><col class="c-name"><col class="c-time"><col class="c-time"><col class="c-time"><col></colgroup>
              <thead><tr><th>Name</th><th>Start</th><th>End</th><th>Duration</th><th>Type<svg class="sort"><use href="#i-up"/></svg></th></tr></thead>
              <tbody>
                <tr><td><svg class="mk"><use href="#i-marker"/></svg>Marker 02</td><td>0:02.083</td><td></td><td>0:00.000</td><td><select aria-label="Type of Marker 02"><option>Cue</option></select></td></tr>
                <tr><td><svg class="mk"><use href="#i-marker"/></svg>Marker 04</td><td>0:08.052</td><td></td><td>0:00.000</td><td><select aria-label="Type of Marker 04"><option>Cue</option></select></td></tr>
                <tr class="picked"><td><svg class="mk"><use href="#i-marker"/></svg>Marker 10</td><td>0:11.258</td><td></td><td>0:00.000</td><td><select aria-label="Type of Marker 10"><option>Cue</option></select></td></tr>
                <tr><td><svg class="mk"><use href="#i-marker"/></svg>Marker 07</td><td>0:17.187</td><td></td><td>0:00.000</td><td><select aria-label="Type of Marker 07"><option>Cue</option></select></td></tr>
                <tr><td><svg class="mk rg"><use href="#i-mkrange"/></svg>Marker 05</td><td>0:19.230</td><td>0:22.075</td><td>0:02.844</td><td><select aria-label="Type of Marker 05"><option>Cue</option></select></td></tr>
              </tbody>
            </table>
            <span class="hthumb" style="width:496px"></span>
          </div>
        </section>
      </div>

      <div class="lower">
        <section class="panel levels">
          <div class="tabs"><h2 class="tab solo">Levels</h2><button class="burger" aria-label="Levels menu"></button></div>
          <div class="bigmeter"><span class="bar"></span><span class="peaks"></span></div>
          <div class="scale">
            <svg class="lticks" data-levels="60"></svg>
            <div class="nums"><span>dB</span><span>-57</span><span>-54</span><span>-51</span><span>-48</span><span>-45</span><span>-42</span><span>-39</span><span>-36</span><span>-33</span><span>-30</span><span>-27</span><span>-24</span><span>-21</span><span>-18</span><span>-15</span><span>-12</span><span>-9</span><span>-6</span><span>-3</span><span>0</span></div>
          </div>
        </section>
        <section class="panel selview">
          <div class="tabs"><h2 class="tab solo">Selection/View</h2><button class="burger" aria-label="Selection menu"></button></div>
          <table>
            <thead><tr><th></th><th>Start</th><th>End</th><th>Duration</th></tr></thead>
            <tbody>
              <tr><th>Selection</th><td>0:14.944</td><td>0:14.944</td><td>0:00.000</td></tr>
              <tr><th>View</th><td>0:00.000</td><td>0:24.158</td><td>0:24.158</td></tr>
            </tbody>
          </table>
        </section>
      </div>
    </div>
  </div>

  <footer class="status"><span>Multitrack Session Backup completed in 0.01 seconds</span></footer>
</div>
<script src="script.js"></script>
</body>
</html>
```

FILE: styles.css
```css
:root {
  --bg: #161616;
  --panel: #232323;
  --list: #1d1d1d;
  --line: #303030;
  --text: #a2a2a2;
  --bright: #d2d2d2;
  --icon: #b4b4b4;
  --dim: #4a4a4a;
  --blue: #409fe6;
  --accent: #2d8ceb;
  --ui: Lato, "Noto Sans", sans-serif;
}
* { box-sizing: border-box; }
body { margin: 0; background: var(--bg); color: var(--text); font: 22px/26px var(--ui); overflow: hidden; }
h1, h2, h3, ul, ol, menu { margin: 0; padding: 0; font: inherit; list-style: none; }
button, input, select { font: inherit; color: inherit; background: none; border: 0; margin: 0; padding: 0; border-radius: 0; }
button { display: flex; align-items: center; justify-content: center; color: var(--icon); }
select { appearance: none; width: 100%; height: 100%; color: var(--bright); }
a { color: inherit; text-decoration: none; }
svg { display: block; flex: none; overflow: visible; }
hr { border: 0; border-top: 2px solid #2f2f2f; margin: 0 11px; }
table { border-collapse: separate; border-spacing: 0; width: 100%; table-layout: fixed; }
th { font-weight: inherit; text-align: left; }
.defs { position: absolute; width: 0; height: 0; }
.blue { color: var(--blue); }
.dim { color: var(--dim); }
.i16 { width: 16px; height: 16px; }
.i24 { width: 24px; height: 24px; }
.i28 { width: 28px; height: 28px; }
.i30 { width: 30px; height: 24px; }
.i30h { width: 30px; height: 32px; }
.i32 { width: 32px; height: 32px; }
.i36 { width: 36px; height: 36px; }
.i40 { width: 40px; height: 40px; }
.w40 { width: 40px; height: 32px; }

.app { display: flex; flex-direction: column; height: 100vh; min-width: 2400px; }

/* Title bar */
.titlebar { flex: none; height: 39px; display: flex; align-items: center; gap: 12px; padding: 0 10px; background: #cac7c8; border-top: 2px solid #e4e2e3; border-bottom: 2px solid #000; border-radius: 12px 12px 0 0; }
.titlebar h1 { flex: 1; text-align: center; color: #414141; padding-right: 92px; }
.dot { width: 18px; height: 18px; border-radius: 50%; }
.dot.red { background: #fe5f57; }
.dot.amber { background: #febc2e; }
.dot.green { background: #28c840; }

/* Toolbar */
.toolbar { flex: none; height: 49px; display: flex; align-items: center; background: var(--panel); padding: 0 10px 0 10px; }
.grip { width: 6px; height: 38px; margin-right: 7px; background: repeating-linear-gradient(#444 0 2px, transparent 2px 4px); }
.seg { display: flex; border: 2px solid var(--line); border-radius: 4px; background: #1f1f1f; }
.seg button { color: var(--text); height: 38px; }
.seg button + button { border-left: 2px solid var(--line); }
.seg .on { background: #141414; color: var(--blue); }
.seg .on svg { color: var(--accent); }
.views button { gap: 16px; width: 182px; }
.vsep { flex: none; width: 3px; height: 100%; background: #2e2e2e; }
.vsep.wide { margin-left: 43px; }
.tools-a { display: flex; padding: 0 14px 0 40px; }
.tools-a .tool { width: 52px; }
.tool { width: 36px; height: 42px; }
.boxed { border: 2px solid #2b2b2b; border-radius: 4px; }
.dimblue { color: #2a4a70; }
.tools-b { display: flex; align-items: center; gap: 12px; padding: 0 20px 0 12px; }
.tools-b .tool { width: 41px; }
.tools-b .tool.on { width: 46px; background: #141414; border: 2px solid var(--line); border-radius: 4px; color: var(--accent); }
.slip { width: 42px; height: 32px; }
.sel { display: grid; align-items: center; background: #1c1c1c; border: 2px solid var(--line); border-radius: 3px; height: 38px; }
.sel select { grid-area: 1/1; padding-left: 12px; }
.sel svg { grid-area: 1/1; justify-self: end; width: 16px; height: 16px; margin-right: 10px; color: #c0c0c0; pointer-events: none; }
.filesel { width: 320px; margin-left: 12px; }
.workspaces { margin-left: auto; display: flex; align-items: center; height: 100%; border-left: 2px solid #141414; border-right: 3px solid #303030; padding: 0 19px 0 46px; gap: 88px; }
.workspaces .on { color: var(--blue); }
.workspaces .burger { margin-left: -61px; }
.workspaces .more { margin-left: -54px; }
.help { display: flex; align-items: center; gap: 24px; padding-left: 26px; }
.tall { width: 36px; height: 40px; }
.help .field { width: 386px; height: 38px; margin-left: -6px; }
.help input { color: var(--bright); padding-top: 4px; }
.help .field svg { color: var(--icon); margin-right: 18px; }
.field { display: flex; align-items: center; background: #161616; border: 2px solid var(--line); border-radius: 4px; padding: 0 8px; }
.field input { flex: 1; min-width: 0; height: 100%; }
.burger { flex: none; width: 16px; height: 18px; background: linear-gradient(currentColor, currentColor) 0 0/100% 2px no-repeat, linear-gradient(currentColor, currentColor) 0 50%/100% 2px no-repeat, linear-gradient(currentColor, currentColor) 0 100%/100% 2px no-repeat; }
.burger.blue { color: var(--accent); }

/* Panels */
.workspace { flex: 1; min-height: 0; display: flex; gap: 8px; padding: 8px 2px 0; }
.left { flex: none; width: 442px; display: flex; flex-direction: column; gap: 8px; }
.main { flex: 1; min-width: 0; display: flex; flex-direction: column; gap: 8px; }
.upper { flex: 1; min-height: 0; display: flex; gap: 8px; }
.lower { flex: none; display: flex; gap: 8px; height: 188px; }
.panel { background: var(--panel); display: flex; flex-direction: column; min-height: 0; overflow: hidden; }
.tabs { flex: none; height: 56px; display: flex; align-items: center; padding-left: 25px; gap: 22px; }
.tab { color: #dedede; white-space: nowrap; }
.tab.off { color: var(--text); }
.tab.cur { display: flex; align-items: center; gap: 22px; height: 48px; border-top: 4px solid transparent; border-bottom: 4px solid #b8b8b8; }
.tools { flex: none; display: flex; align-items: center; }
.tools .dim, .preview .dim, .keys .dim { color: var(--dim); }
.list { flex: 1; min-height: 0; margin: 0 11px; background: var(--list); border: 2px solid #2b2b2b; border-radius: 4px; display: flex; flex-direction: column; overflow: hidden; }
.list thead th { height: 40px; background: var(--panel); border-bottom: 2px solid #2f2f2f; padding: 0 0 0 7px; overflow: hidden; white-space: nowrap; }
.list th + th { border-left: 2px solid #2b2b2b; }
.list td { height: 38px; border-bottom: 2px solid #2b2b2b; padding: 0 0 0 8px; white-space: nowrap; }
.sort { display: inline-block; width: 16px; height: 18px; margin-left: 6px; color: #999; }
.picked td { background: #464646; }
.hthumb { flex: none; height: 21px; border-radius: 10px; background: #313131; margin-top: auto; }
.vthumb { flex: none; width: 20px; border-radius: 10px; background: #313131; }

/* Files */
.files { flex: none; height: 516px; }
.files .tools { height: 57px; padding: 0 0 0 19px; gap: 20px; }
.files .tools button:last-child { margin-left: 4px; }
.files .list { flex: none; height: 340px; }
.c-file { width: 362px; }
.file { display: flex; align-items: center; gap: 12px; }
.file .i16 { margin-right: 24px; }
.preview { flex: 1; display: flex; align-items: center; justify-content: center; gap: 27px; padding-left: 6px; }
.speaker { width: 44px; height: 32px; }

/* Effects rack */
.rack { flex: none; height: 788px; }
.racktabs { padding-left: 0; gap: 0; }
.racktabs .off { width: 122px; }
.racktabs .cur { margin-right: 42px; }
.racktabs .cut { width: 44px; overflow: hidden; border-right: 2px solid #393939; }
.racktabs .more { margin-left: auto; margin-right: 6px; }
.racks { width: 318px; margin: 6px 0 9px 68px; }
.racks button { flex: 1; height: 36px; }
.presets { display: flex; align-items: center; height: 56px; padding: 0 14px 0 11px; gap: 12px; }
.presets label { width: 72px; white-space: nowrap; }
.presets .sel { width: 182px; }
.presets .fav { margin-left: auto; border-left: 2px solid #2d2d2d; padding-left: 11px; height: 38px; }
.presets .i36 { color: #999; }
.rack h3 { font-weight: 700; padding: 6px 11px 17px; }
.slots, .hist { flex: none; margin: 0 11px; background: var(--list); border: 2px solid var(--line); border-radius: 4px; display: flex; overflow: hidden; }
.slots { height: 328px; }
.slots ol { flex: 1; margin-right: 3px; }
.slots .vthumb { margin: 2px; }
.slots li { display: flex; align-items: center; height: 38px; border-bottom: 2px solid #2b2b2b; }
.slots b { width: 38px; font-weight: 400; text-align: center; height: 100%; line-height: 40px; border-right: 2px solid #2b2b2b; }
.slots li span { flex: 1; padding-top: 3px; white-space: nowrap; }
.slots i { width: 40px; height: 100%; border-left: 2px solid #2b2b2b; display: flex; align-items: center; padding-left: 12px; color: var(--icon); }
.slots i svg { width: 10px; height: 18px; }
.pw { width: 32px; height: 34px; margin: 0 8px 0 5px; border: 2px solid #2f2f2f; border-radius: 3px; }
.pw svg { width: 26px; height: 26px; }
.pw.on, .rackfoot .green { background: #2f9d6a; color: #b9e2cd; }
.gain { display: flex; align-items: center; height: 48px; padding: 0 24px 0 0; gap: 8px; }
.slots + .gain { margin-top: 6px; }
.gain .lab { width: 94px; text-align: right; margin-right: -2px; }
.bars { width: 32px; height: 30px; margin-right: 2px; }
.hmeter { margin-left: auto; width: 134px; height: 38px; border: 2px solid #000; background: linear-gradient(#ff0, #ff0) 3px 0/2px 100% no-repeat, linear-gradient(#000, #000) 110px 0/2px 100% no-repeat, var(--panel); }
.gainscale { margin: -5px 0 0 284px; font-size: 18px; }
.gainscale .gticks { width: 132px; height: 8px; }
.gainscale div { display: flex; padding-top: 3px; }
.gainscale div span { width: 36px; }
.gainscale div span:nth-child(2) { width: 68px; }
.mix { display: flex; align-items: center; height: 52px; }
.mix label { width: 94px; text-align: right; margin-right: 31px; }
.mix .dry { width: 56px; }
.mix input { width: 88px; height: 20px; appearance: none; margin-right: 8px; background: linear-gradient(#555, #555) 0 50%/66px 3px no-repeat; }
.mix input::-webkit-slider-thumb { appearance: none; width: 20px; height: 20px; border: 4px solid #8c8c8c; border-radius: 50%; background: var(--panel); }
.mix .wet { width: 74px; }
.rackfoot { display: flex; gap: 6px; padding: 10px; }
.rackfoot button { width: 40px; height: 38px; border: 2px solid var(--line); border-radius: 4px; background: #1d1d1d; }
.rackfoot .on { background: #141414; color: var(--accent); }
.rackfoot .green { width: 37px; border: 0; }

/* History */
.history { flex: 1; }
.hist { height: 460px; margin-top: 8px; }
.hist ul { flex: 1; padding-top: 3px; margin-right: 3px; border-top: 2px solid #2b2b2b; }
.hist li { display: flex; align-items: center; height: 38px; border-bottom: 2px solid #2b2b2b; padding: 2px 0 0 43px; gap: 20px; }
.hist .vthumb { align-self: flex-end; margin-right: 1px; }
.mk { width: 18px; height: 28px; margin-bottom: 6px; }
.hist .mv { padding-left: 39px; gap: 10px; color: var(--text); }
.hist .now { background: #464646; font-weight: 700; padding-left: 4px; }
.nowtag { width: 18px; height: 28px; }
.histfoot { flex: 1; display: flex; align-items: center; justify-content: space-between; padding: 0 17px 0 11px; }

/* Favorites */
.favorites { flex: none; width: 440px; }
.favtools { height: 62px; padding: 0 0 0 22px; gap: 20px; }
.favtools .on { width: 50px; height: 42px; background: #141414; border: 2px solid var(--line); border-radius: 4px; color: var(--accent); margin-left: -6px; }
.favbody { flex: 1; min-height: 0; display: flex; padding-bottom: 11px; }
.favlist { margin-right: 0; }
.list.favlist td { padding: 3px 0 0 11px; }
.c-fav { width: 320px; }
.drawer { flex: none; width: 18px; margin-right: 10px; background: #2f2f2f; display: flex; flex-direction: column; align-items: center; justify-content: space-between; }
.drawer svg { width: 8px; height: 16px; margin-top: 32px; }
.dots { width: 8px; height: 52px; margin-bottom: 762px; background: radial-gradient(circle, #777 1px, transparent 1px) 0 0/4px 4px; }

/* Editor */
.editor { flex: 1; min-width: 0; border: 2px solid #3a87d6; }
.edtabs { height: 52px; padding-left: 23px; gap: 0; }
.edtabs .cur { margin: 0 44px 0 78px; }
.overview { flex: none; display: flex; align-items: center; justify-content: space-between; padding: 18px 28px 0 11px; background: #262626; }
.strip { flex: 1; height: 56px; background: #000; margin-right: 26px; position: relative; padding: 12px 28px 0 0; }
.span { display: block; height: 4px; background: #277527; }
.range { position: absolute; left: -4px; top: -2px; width: 42px; height: 60px; }
.timeline { flex: 1; min-height: 0; display: flex; padding-left: 11px; border-bottom: 2px solid var(--line); background: #262626; }
.heads { flex: none; width: 447px; display: flex; flex-direction: column; border-left: 1px solid var(--line); border-right: 1px solid var(--line); background: #262626; }
.edtools { flex: none; height: 90px; display: flex; justify-content: space-between; align-items: flex-end; padding: 0 18px 8px 0; border-bottom: 2px solid var(--line); }
.quad { margin-bottom: 3px; }
.quad button { width: 42px; color: var(--icon); }
.snap { display: flex; align-items: center; }
.snap .on { width: 42px; height: 42px; background: #141414; border: 2px solid var(--line); border-radius: 4px; color: var(--accent); }
.snap button { margin-right: 4px; }
.snap button.on { margin-right: 0; }
.snap .pin { margin: 0 0 0 6px; }
.h1 { height: 246px; }
.h2 { height: 248px; }
.h3 { height: 252px; }
.h1, .h2, .h3 { flex: none; margin-bottom: 6px; }
.h3:nth-last-child(2) { margin-bottom: 0; }
.track { display: grid; grid-template: 38px 1fr / 1fr 38px; gap: 6px; padding: 12px 8px 12px 34px; background: linear-gradient(90deg, var(--c) 26px, var(--panel) 26px); border-radius: 8px 0 0 8px; box-shadow: 0 6px 0 #2e2e2e; }
.track.picked { background: linear-gradient(90deg, var(--c) 26px, #2f2f2f 26px); }
.host { --c: #1c3029; }
.interview { --c: #4cc850; }
.sfx { --c: #454016; }
.bed { --c: #451f19; }
.master { --c: #14283e; box-shadow: none; margin-bottom: 0; }
.tname { grid-column: 1/3; display: flex; gap: 6px; align-items: center; padding-left: 7px; }
.tname span { flex: 1; padding: 2px 0 0 3px; }
.tname button { width: 38px; height: 38px; border: 2px solid var(--line); border-radius: 4px; background: var(--list); color: #c8c8c8; font: 20px "DejaVu Sans Mono", monospace; }
.tname button:disabled { color: #444; background: none; }
.tname .solo-safe { font-size: 18px; }
.tctl { display: flex; flex-direction: column; }
.knobs { display: flex; align-items: center; height: 46px; }
.knobs .bars { margin-right: 9px; }
.knobs .blue { width: 89px; padding-left: 9px; }
.panic { width: 34px; height: 30px; margin-right: 9px; }
.knobs .panic ~ .blue { width: 40px; }
.mono { width: 32px; height: 26px; margin-left: auto; margin-right: 3px; }
.row { display: flex; align-items: center; gap: 6px; margin-bottom: 6px; }
.row .sel { flex: 1; height: 38px; }
.knobs + .row { margin-top: 3px; }
.h1 .knobs + .row { margin-top: 1px; }
.row.last { margin: auto 0 0; }
.arr { width: 28px; height: 22px; margin-bottom: 6px; }
.arr.sm { width: 16px; height: 16px; margin: 0 12px 4px 0; }
.ph { width: 38px; height: 38px; border: 2px solid var(--line); border-radius: 4px; background: var(--list); }
.ph svg { width: 26px; height: 26px; }
.vmeter { height: 170px; align-self: end; margin-bottom: -1px; border: 2px solid #000; background: linear-gradient(#000, #000) 0 16px/100% 2px no-repeat, linear-gradient(#ff0, #ff0) 0 160px/100% 3px no-repeat, #1b1b1b; }
.vmeter.stereo { background: linear-gradient(#000, #000) 50% 0/2px 16px no-repeat, linear-gradient(#000, #000) 0 16px/100% 2px no-repeat, linear-gradient(#1b1b1b, #1b1b1b) 50% 160px/2px 4px no-repeat, linear-gradient(#ff0, #ff0) 0 162px/100% 2px no-repeat, #1b1b1b; }
.h1 .vmeter { height: 166px; background-position: 0 16px, 0 157px; }
.blank { flex: 1; background: var(--panel); border-top: 2px solid var(--line); }

.canvas { flex: 1; min-width: 0; position: relative; display: flex; flex-direction: column; --t: 0; }
.markerbar { flex: none; height: 30px; margin-top: 7px; position: relative; border-top: 2px solid #8c8c8c; display: flex; align-items: center; box-shadow: 0 -2px 0 #000; background: #262626; padding-left: 6px; }
.markerbar::after { content: ""; position: absolute; right: -11px; top: -2px; width: 11px; height: 2px; background: #8c8c8c; }
.mkl { position: absolute; left: -8px; top: 0; width: 9px; height: 24px; }
.flag { position: absolute; left: calc(var(--t) / 24.158 * 100% - 9px); top: 0; display: flex; gap: 5px; color: #8d8d8d; white-space: nowrap; }
.flag svg { width: 18px; height: 24px; }
.flag em { font-style: normal; color: #444; margin-left: -2px; }
.ruler { flex: none; height: 53px; position: relative; border: 2px solid #000; border-bottom-color: var(--line); background: var(--panel); font-size: 20px; }
.unit { position: absolute; left: 3px; top: 4px; }
.tm { position: absolute; left: calc(var(--t) / 24.158 * 100%); top: 4px; width: 80px; margin-left: -40px; text-align: center; }
.ticks { position: absolute; left: 0; bottom: 0; width: 100%; height: 18px; }
.lane { position: relative; background: var(--list); box-shadow: 0 6px 0 #2e2e2e; }
.lane:nth-last-of-type(2) { box-shadow: none; margin-bottom: 0; }
.clip { position: relative; height: 100%; display: flex; flex-direction: column; }
.clip .wave { flex: 1; width: 100%; min-height: 0; }
.cliptitle { flex: none; display: flex; align-items: center; justify-content: space-between; padding: 0 16px 0 5px; height: 26px; font-size: 20px; color: #c4cbc8; white-space: nowrap; }
.cliptitle svg { width: 16px; height: 16px; margin-bottom: 6px; }
.guitar { background: #132d28; }
.guitar .cliptitle { background: #1b302a; }
.guitar .w { fill: #00ad80; }
.pod { background: #007a18; border: 4px solid #e6e6e6; border-right: 0; }
.pod .cliptitle { background: #277527; height: 22px; color: #fff; font-weight: 700; font-size: 18px; padding-left: 2px; }
.pod .w { fill: #00ff48; }
.vol { position: absolute; left: 18px; bottom: 19px; width: 20px; height: 16px; color: #c0d0c8; }
.pod .vol { left: 16px; bottom: 12px; }
.stretch { position: absolute; left: 54px; bottom: 3px; display: flex; align-items: center; gap: 8px; color: #fff; font-weight: 700; font-size: 18px; }
.stretch svg { width: 36px; height: 36px; }
.flag.in { top: 24px; color: #8f9b96; }
.flag.in svg { height: 26px; }
.h2 .flag.in { top: 26px; }
.flag.faint { color: #4b6b50; }
.flag.faint svg { opacity: .6; }
.flag.lit { color: #b9cbbb; }
.flag.lit svg { filter: brightness(1.5); }
.flag.range { width: 158px; gap: 6px; border-top: 2px solid #6e6e6e; color: #6b8a70; }
.flag.range span { flex: 1; }
.flag.range svg { width: 9px; }
.dash { position: absolute; left: calc(var(--t) / 24.158 * 100%); top: 52px; bottom: 4px; width: 2px; background: repeating-linear-gradient(#e8e8e8 0 3px, #0a1a10 3px 6px); }
.dash.sparse { background: repeating-linear-gradient(#e8e8e8 0 4px, transparent 4px 12px); }
.dash.full { top: 38px; bottom: 4px; }
.zero { position: absolute; left: 0; top: 38px; bottom: 4px; width: 2px; background: repeating-linear-gradient(#e0e0e0 0 4px, #111 4px 12px); }
.playline { position: absolute; left: calc(var(--t) / 24.158 * 100%); top: 90px; bottom: 0; width: 2px; background: #b01414; }
.cueline { position: absolute; left: calc(var(--t) / 24.158 * 100%); top: 38px; height: 20px; width: 2px; background: repeating-linear-gradient(#e8e8e8 0 3px, #000 3px 6px); }
.head { position: absolute; left: calc(var(--t) / 24.158 * 100% - 11px); top: 57px; width: 24px; height: 34px; }

/* Context menu */
.ctx { position: absolute; left: 566px; top: 388px; width: 392px; padding: 11px 28px 10px; border-radius: 12px; background: linear-gradient(#9fdca6, #9bdaa2 35%, #a9c3ac 53%, #b1b1b1 63%, #b2b2b2); box-shadow: 0 0 0 1px #7a8a7a, 0 10px 30px #0008; font: 25px/44px Inter, sans-serif; color: #141414; }
.ctx button { width: 100%; height: 44px; color: inherit; justify-content: space-between; }
.ctx button:disabled { color: #0006; }
.ctx svg { width: 20px; height: 20px; }
.ctx .line { height: 22px; background: linear-gradient(#0003, #0003) 0 50%/100% 2px no-repeat; }

.vscroll { flex: none; width: 36px; margin: 91px 16px 0 1px; background: #2b2b2b; border: solid #666; border-width: 0 3px; padding: 0 1px; border-radius: 8px; display: flex; flex-direction: column; gap: 6px; }
.vscroll .cap { flex: none; height: 12px; margin: 0 2px -6px; border-radius: 5px; background: linear-gradient(#2b2b2b, #2b2b2b) 50% 4px/18px 2px no-repeat, linear-gradient(#2b2b2b, #2b2b2b) 50% 9px/18px 2px no-repeat, #666; z-index: 1; }
.vscroll .cap:last-child { margin: -6px 2px 0; }
.s1 { flex: 267; background: #455650; }
.s2 { flex: 272; background: #72d070; }
.s3 { flex: 278; background: #67643c; }
.s4 { flex: 278; background: #694036; }
.s5 { flex: 268; background: #3b4c60; }

.transport { flex: none; height: 72px; display: flex; align-items: center; justify-content: space-between; padding: 0 32px 0 20px; }
.clock { color: var(--blue); font-size: 31px; width: 373px; padding-top: 6px; }
.keys { display: flex; gap: 28px; }
.keys:last-child { margin-left: auto; }
.z { width: 32px; height: 36px; }

/* Markers */
.markers { flex: none; width: 824px; padding-bottom: 11px; }
.mktabs { gap: 0; }
.mktabs .cur { margin-left: 80px; }
.mktools { height: 57px; padding: 0 18px 0 12px; gap: 25px; }
.mktools .field { flex: 1; height: 40px; padding: 0 12px; margin-left: 1px; }
.mktools button:last-child { margin-left: -8px; }
.lookup { width: 36px; height: 28px; color: var(--icon); }
.mklist { margin-right: 8px; }
.c-name { width: 251px; }
.c-time { width: 152px; }
.mklist td { color: var(--blue); padding-left: 8px; }
.mklist td:first-child { color: var(--text); padding-left: 14px; }
.mklist td:last-child { padding: 0; border: 0; }
.mklist .mk { display: inline-block; vertical-align: middle; margin: -4px 13px 0 0; }
.mklist .rg { width: 24px; margin: -4px 10px 0 -3px; }
.mklist select { display: block; height: 34px; width: 110px; padding-left: 12px; border: 2px solid var(--line); border-radius: 4px; background: var(--list); }

/* Levels */
.levels { flex: 1; min-width: 0; }
.bigmeter { margin: 10px 12px 0 11px; height: 82px; border: 2px solid #000; background: var(--list); display: flex; justify-content: space-between; }
.bar { width: 2px; margin-left: 2px; background: linear-gradient(#ff0 0 38px, transparent 38px 40px, #ff0 40px); }
.peaks { width: 18px; border-left: 2px solid #000; background: linear-gradient(#000, #000) 0 50%/100% 2px no-repeat; }
.scale { margin: 0 35px 0 15px; font-size: 18px; }
.lticks { width: 100%; height: 8px; }
.nums { display: flex; justify-content: space-between; padding-top: 4px; }
.nums span { width: 0; display: flex; justify-content: center; }
.nums span:first-child { justify-content: flex-start; }

/* Selection/View */
.selview { flex: none; width: 554px; }
.selview table { margin-left: 22px; width: 530px; }
.selview th, .selview td { height: 42px; padding: 0; }
.selview tr > :first-child { width: 105px; }
.selview tr > :nth-child(2) { width: 144px; }
.selview tr > :nth-child(3) { width: 142px; }
.selview td { color: var(--blue); }
.selview thead th { height: 38px; padding-top: 5px; }

.status { flex: none; height: 14px; margin-top: 4px; overflow: hidden; background: var(--panel); padding: 4px 0 0 18px; font-size: 20px; }
```

FILE: script.js
```js
// Half-height envelopes as [x, up, down] in clip pixels.
const envelopes = {
  guitar1: [[0,2,2],[5,20,22],[18,14,16],[28,17,18],[40,27,26],[60,32,28],[66,33,42],[75,36,22],[79,13,18],[84,14,14],[90,26,22],[96,17,18],[110,22,24],[118,12,18],[130,13,12],[132,28,28],[140,17,14],[165,18,20],[170,9,9],[177,10,10],[178,32,34],[186,18,28],[200,24,22],[212,20,22],[222,23,16],[235,13,10],[255,9,13],[275,11,13],[300,9,9],[315,5,6],[335,4,3],[350,2,2],[365,1,1],[408,1,1]],
  guitar2: [[0,2,2],[5,20,20],[18,16,16],[27,16,18],[40,28,26],[58,28,32],[64,33,33],[75,28,28],[80,16,16],[98,16,18],[100,26,34],[120,26,24],[126,14,14],[131,26,32],[140,20,14],[155,20,26],[170,17,18],[178,20,30],[200,20,20],[225,17,14],[250,12,14],[275,11,11],[300,8,8],[315,5,5],[340,3,2],[360,1,1],[408,1,1]],
  pod: [[0,1,1],[14,1,1],[15,28,28],[18,24,28],[20,6,6],[26,17,16],[32,15,14],[36,2,2],[40,2,2],[43,22,20],[50,15,14],[53,10,8],[58,26,22],[66,20,22],[74,28,22],[84,22,26],[92,17,22],[104,11,11],[120,8,8],[140,6,5],[166,2,2],[168,26,24],[177,24,26],[178,3,3],[181,24,16],[187,22,14],[189,4,4],[192,26,24],[212,28,24],[216,6,6],[221,22,20],[233,20,16],[235,2,2],[239,27,24],[250,27,24],[252,4,4],[255,16,14],[262,24,22],[270,28,26],[280,24,26],[290,28,22],[302,26,18],[304,4,4],[312,16,16],[318,4,4],[321,14,12],[326,28,22],[334,16,16],[336,1,1],[388,1,1],[389,20,16],[394,8,8],[400,12,12],[403,4,4],[405,22,18],[414,20,18],[424,7,7],[436,6,6],[441,22,20],[450,12,14],[458,18,16],[460,9,10],[470,7,8],[480,8,8],[485,18,14],[492,8,8],[498,9,9],[506,2,2],[515,2,2],[522,10,12],[532,13,12],[541,2,2],[549,2,2],[551,24,20],[560,12,12],[600,20,18],[660,6,6],[700,22,18],[760,8,8],[800,20,18],[860,10,8],[940,8,8],[958,5,5],[966,5,5],[967,24,20],[985,18,16],[1000,12,10],[1013,3,3],[1022,3,3],[1023,18,16],[1040,12,12],[1052,10,10],[1057,18,20],[1080,18,18],[1097,16,10],[1099,4,4],[1110,5,4],[1112,23,18],[1130,17,14],[1154,4,4],[1168,3,3],[1170,18,18],[1185,13,12],[1206,14,14]]
};
envelopes.pod1 = envelopes.pod;
envelopes.pod2 = envelopes.pod;

let seed = 7;
const rand = () => (seed = (seed * 16807) % 2147483647) / 2147483647;

document.querySelectorAll('[data-wave]').forEach(path => {
  const pts = envelopes[path.dataset.wave];
  const speech = path.dataset.wave.startsWith('pod');
  const mid = +path.dataset.mid;
  const top = [], bottom = [];
  let k = 0;
  for (let x = 0; x < pts[pts.length - 1][0]; x += 2) {
    while (x > pts[k + 1][0]) k++;
    const [x0, u0, d0] = pts[k], [x1, u1, d1] = pts[k + 1];
    const f = (x - x0) / (x1 - x0);
    const spread = u0 > 13 ? (speech ? 0.75 : 0.4) : 0.15;
    const up = (u0 + (u1 - u0) * f) * (1.08 - spread * rand() * rand());
    const down = (d0 + (d1 - d0) * f) * (1.08 - spread * rand() * rand());
    top.push(`${x} ${(mid - up).toFixed(1)}H${x + 2}`);
    bottom.unshift(`${x + 2} ${(mid + down).toFixed(1)}H${x}`);
  }
  path.setAttribute('d', 'M' + top.join('L') + 'L' + bottom.join('L') + 'Z');
});

function tickMarks(svg, total, major, height, minor) {
  for (let i = 0; i <= total; i++) {
    const line = document.createElementNS('http://www.w3.org/2000/svg', 'line');
    const x = (i / total * 100) + '%';
    line.setAttribute('x1', x);
    line.setAttribute('x2', x);
    const big = i % major === 0;
    line.setAttribute('y1', minor.up && !big ? height - minor.size : 0);
    line.setAttribute('y2', minor.up || big ? height : minor.size);
    line.setAttribute('stroke', '#8a8a8a');
    line.setAttribute('stroke-width', 2);
    svg.append(line);
  }
}
const ruler = document.querySelector('[data-ticks]');
const seconds = +ruler.dataset.ticks;
ruler.style.width = (24 / seconds * 100) + '%';
tickMarks(ruler, 24, 5, 17, { up: true, size: 10 });
tickMarks(document.querySelector('[data-levels]'), 60, 3, 8, { up: false, size: 4 });
```
